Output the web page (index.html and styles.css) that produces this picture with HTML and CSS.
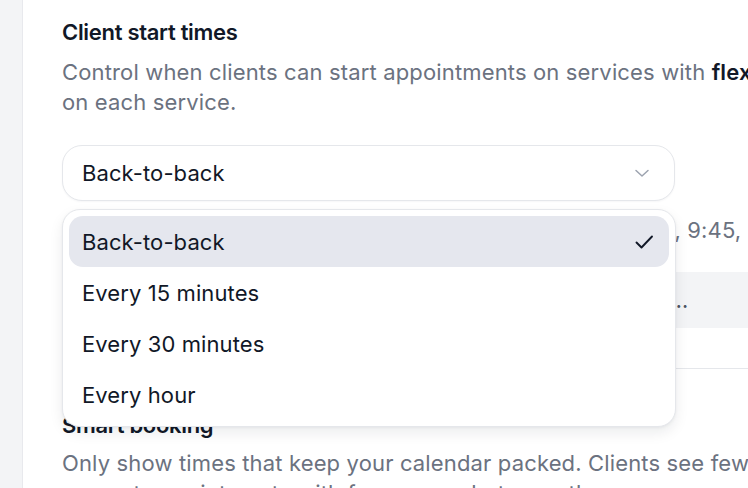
FILE: index.html
```html
<!DOCTYPE html>
<html lang="en">

<head>
  <meta charset="UTF-8">
  <meta name="viewport" content="width=device-width, initial-scale=1.0">
  <title>Booking settings</title>
  <link rel="stylesheet" href="styles.css">
</head>

<body>

  <div class="layout">
    <aside class="sidebar"></aside>

    <main class="content">
      <section class="setting">
        <h2 class="setting-title">Client start times</h2>
        <p class="setting-desc">Control when clients can start appointments on services with <b>flexible timing</b>. Set it
          on each service.</p>

        <div class="select-wrap">
          <button class="select">
            <span>Back-to-back</span>
            <svg class="chevron" width="20" height="20" viewBox="0 0 20 20" fill="none">
              <path d="M4 7.5l6 5.5 6-5.5" stroke="currentColor" stroke-width="1.5" stroke-linecap="round" stroke-linejoin="round" />
            </svg>
          </button>

          <ul class="menu">
            <li class="menu-item selected">
              <span>Back-to-back</span>
              <svg class="check" width="22" height="22" viewBox="0 0 22 22" fill="none">
                <path d="M3.5 11.5l5 5L19 5.5" stroke="currentColor" stroke-width="1.9" stroke-linecap="round" stroke-linejoin="round" />
              </svg>
            </li>
            <li class="menu-item">Every 15 minutes</li>
            <li class="menu-item">Every 30 minutes</li>
            <li class="menu-item">Every hour</li>
          </ul>
        </div>

        <p class="setting-hint">In 15-min steps, clients see open slots like 9:00, 9:15, 9:30, 9:45, 10:00 and so on.</p>

        <div class="preview">
          <span class="preview-text">Today: 9:00, 9:25, 10:10, 10:40, 11:30, 12:15, 13:00, 13:45, 14:20, 15:05, 16:00</span>
        </div>
      </section>

      <section class="setting">
        <h2 class="setting-title">Smart booking</h2>
        <p class="setting-desc">Only show times that keep your calendar packed. Clients see fewer options, and you get
          appointments with fewer gaps between them.</p>
      </section>
    </main>
  </div>

</body>

</html>
```

FILE: styles.css
```css
* {
  box-sizing: border-box;
}

body {
  margin: 0;
  padding: 0;
  height: 100vh;
  overflow: hidden;
  background-color: #fff;
  font-family: Inter, "Noto Sans", sans-serif;
  color: #111827;
}

.layout {
  display: flex;
  min-height: 100vh;
}

.sidebar {
  flex: 0 0 23px;
  background-color: #f3f4f6;
  border-right: 1px solid #e8e9ed;
}

.content {
  flex: 0 0 1000px;
  padding: 18px 0 0 39px;
}

.setting {
  padding-bottom: 40px;
}

.setting+.setting {
  border-top: 1px solid #e5e7eb;
  padding-top: 42px;
}

.setting-title {
  margin: 0;
  font-size: 22px;
  line-height: 28px;
  font-weight: 600;
  letter-spacing: -0.3px;
  color: #111827;
}

.setting-desc {
  max-width: 880px;
  margin: 11px 0 0;
  font-size: 22px;
  line-height: 30px;
  letter-spacing: 0.15px;
  color: #6b7280;
}

.setting-desc b {
  font-weight: 600;
  color: #111827;
}

.setting+.setting .setting-desc {
  margin-top: 9px;
}

.select-wrap {
  position: relative;
  width: 614px;
  margin-top: 28px;
}

.select {
  width: 613px;
  height: 56px;
  padding: 0 22px 0 19px;
  display: flex;
  align-items: center;
  justify-content: space-between;
  border: 1px solid #e5e7eb;
  border-radius: 20px;
  background-color: #fff;
  font-family: inherit;
  font-size: 22px;
  letter-spacing: 0.1px;
  color: #111827;
  box-shadow: 0 1px 2px rgba(17, 24, 39, 0.04);
}

.chevron {
  color: #9ca3af;
}

.menu {
  position: absolute;
  top: 64px;
  left: 0;
  width: 614px;
  margin: 0;
  padding: 6px;
  list-style: none;
  background-color: #fff;
  border: 1px solid #e5e7eb;
  border-radius: 18px;
  box-shadow: 0 6px 14px rgba(17, 24, 39, 0.08), 0 1px 3px rgba(17, 24, 39, 0.05);
  z-index: 10;
}

.menu-item {
  height: 51px;
  padding: 0 14px 0 13px;
  display: flex;
  align-items: center;
  justify-content: space-between;
  border-radius: 14px;
  font-size: 22px;
  letter-spacing: 0.1px;
  color: #111827;
}

.menu-item.selected {
  background-color: #e5e7ee;
}

.check {
  color: #111827;
}

.setting-hint {
  margin: 14px 0 0;
  font-size: 22px;
  line-height: 30px;
  letter-spacing: 0.15px;
  color: #6b7280;
  white-space: nowrap;
}

.preview {
  margin-top: 27px;
  height: 56px;
  padding: 0 16px;
  display: flex;
  align-items: center;
  background-color: #f3f4f6;
  border-radius: 12px;
}

.preview-text {
  max-width: 612px;
  overflow: hidden;
  white-space: nowrap;
  text-overflow: ellipsis;
  font-size: 22px;
  color: #4b5563;
}
```
